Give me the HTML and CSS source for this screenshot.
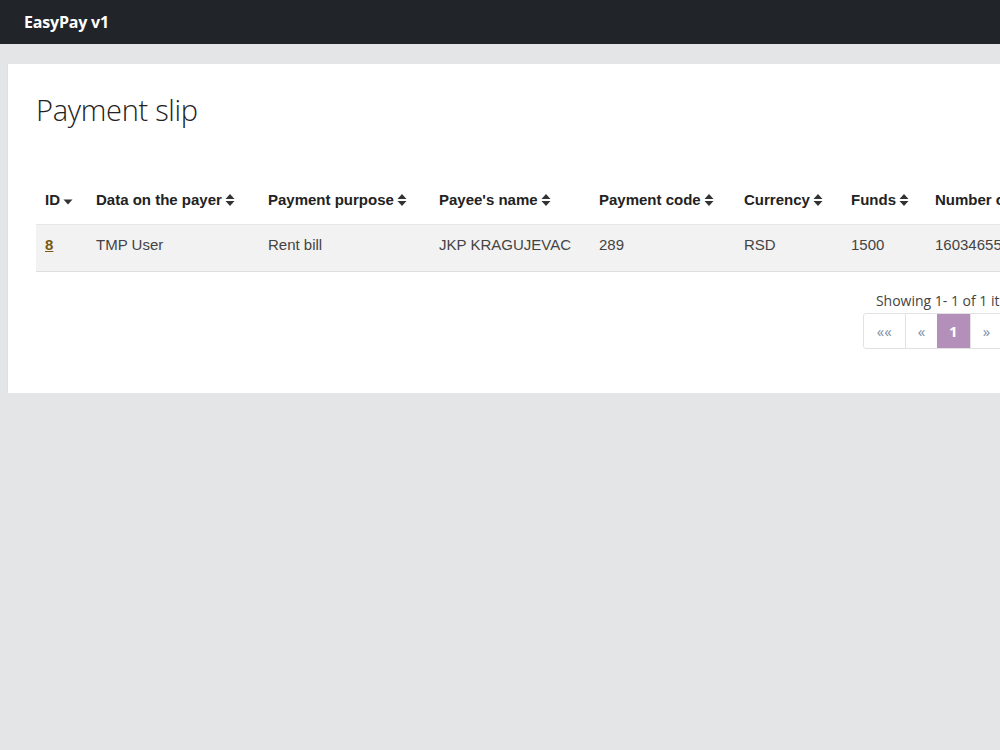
FILE: index.html
```html
<!doctype html>
<html>
<head>
<meta charset="utf-8">
<meta name="viewport" content="width=device-width, initial-scale=1" />
<title>EasyPay v1</title>
<link rel="stylesheet" href="styles.css">
</head>

<body>

	<div class="topBar"><span class="brand">EasyPay v1</span></div>

	<div class="page">
		<div class="card">
			<h1 class="title">Payment slip</h1>

			<table class="slips">
				<colgroup>
					<col style="width:51px">
					<col style="width:172px">
					<col style="width:171px">
					<col style="width:160px">
					<col style="width:145px">
					<col style="width:107px">
					<col style="width:84px">
					<col>
				</colgroup>
				<thead>
					<tr>
						<th>ID<svg class="sort" viewBox="0 0 10 14"><path d="M0.5 6.5h9l-4.5 5z"/></svg></th>
						<th>Data on the payer<svg class="sort" viewBox="0 0 10 14"><path d="M0.5 6h9l-4.5-5z M0.5 8h9l-4.5 5z"/></svg></th>
						<th>Payment purpose<svg class="sort" viewBox="0 0 10 14"><path d="M0.5 6h9l-4.5-5z M0.5 8h9l-4.5 5z"/></svg></th>
						<th>Payee's name<svg class="sort" viewBox="0 0 10 14"><path d="M0.5 6h9l-4.5-5z M0.5 8h9l-4.5 5z"/></svg></th>
						<th>Payment code<svg class="sort" viewBox="0 0 10 14"><path d="M0.5 6h9l-4.5-5z M0.5 8h9l-4.5 5z"/></svg></th>
						<th>Currency<svg class="sort" viewBox="0 0 10 14"><path d="M0.5 6h9l-4.5-5z M0.5 8h9l-4.5 5z"/></svg></th>
						<th>Funds<svg class="sort" viewBox="0 0 10 14"><path d="M0.5 6h9l-4.5-5z M0.5 8h9l-4.5 5z"/></svg></th>
						<th>Number of account<svg class="sort" viewBox="0 0 10 14"><path d="M0.5 6h9l-4.5-5z M0.5 8h9l-4.5 5z"/></svg></th>
					</tr>
				</thead>
				<tbody>
					<tr>
						<td><a href="#" class="idLink">8</a></td>
						<td>TMP User</td>
						<td>Rent bill</td>
						<td>JKP KRAGUJEVAC</td>
						<td>289</td>
						<td>RSD</td>
						<td>1500</td>
						<td>1603465512</td>
					</tr>
				</tbody>
			</table>

			<div class="pager">
				<div class="info">Showing 1- 1 of 1 items</div>
				<div class="pagination">
					<span class="pageBtn">&laquo;&laquo;</span>
					<span class="pageBtn">&laquo;</span>
					<span class="pageBtn active">1</span>
					<span class="pageBtn">&raquo;</span>
					<span class="pageBtn">&raquo;&raquo;</span>
				</div>
			</div>
		</div>
	</div>

</body>
</html>
```

FILE: styles.css
```css
html {
	overflow: hidden;
}

body {
	margin: 0;
	background-color: #E4E5E7;
	font-family: "Open Sans", sans-serif;
	color: #333333;
}

.topBar {
	height: 44px;
	background-color: #212529;
	display: flex;
	align-items: center;
	padding-left: 24px;
}

.brand {
	color: #FFFFFF;
	font-weight: 700;
	font-size: 16px;
	letter-spacing: -0.2px;
}

.page {
	padding: 20px 0 0 8px;
	width: 1100px;
}

.card {
	background: #FFFFFF;
	padding: 20px 28px 44px 28px;
	box-shadow: 0px 1px 1px #BDBDBD;
	width: 1007px;
}

.title {
	margin: 0;
	padding-top: 6px;
	font-weight: 300;
	font-size: 29px;
	line-height: 40px;
	color: #222222;
	letter-spacing: -0.3px;
	height: 90px;
}

.slips {
	width: 100%;
	table-layout: fixed;
	border-collapse: collapse;
	font-family: "Liberation Sans", Arial, sans-serif;
	font-size: 15px;
}

.slips th {
	text-align: left;
	font-weight: 700;
	color: #222222;
	height: 39px;
	padding: 0 0 5px 9px;
	white-space: nowrap;
}

.slips td {
	height: 38px;
	padding: 0 0 8px 9px;
	color: #444444;
	background: #F2F2F2;
	border-top: 1px solid #E6E6E6;
	border-bottom: 1px solid #DEDEDE;
	white-space: nowrap;
}

.sort {
	width: 10px;
	height: 14px;
	margin-left: 3px;
	vertical-align: -2px;
	fill: #333333;
}

.idLink {
	color: #7A5A12;
	font-weight: 700;
	text-decoration: underline;
}

.pager {
	display: flex;
	flex-direction: column;
	align-items: flex-end;
	margin-top: 20px;
}

.info {
	font-size: 14px;
	color: #444444;
	line-height: 18px;
	margin-right: 16px;
}

.pagination {
	display: flex;
	margin-top: 3px;
	border: 1px solid #E2E2E2;
	border-radius: 3px;
}

.pageBtn {
	height: 34px;
	line-height: 34px;
	padding: 0 12px;
	font-size: 15px;
	color: #7B8FA8;
	border-left: 1px solid #E2E2E2;
}

.pageBtn:first-child {
	border-left: none;
	padding: 0 13px;
}

.pageBtn.active {
	background: #B48FBA;
	color: #FFFFFF;
	font-weight: 700;
	border-left: none;
}
```
